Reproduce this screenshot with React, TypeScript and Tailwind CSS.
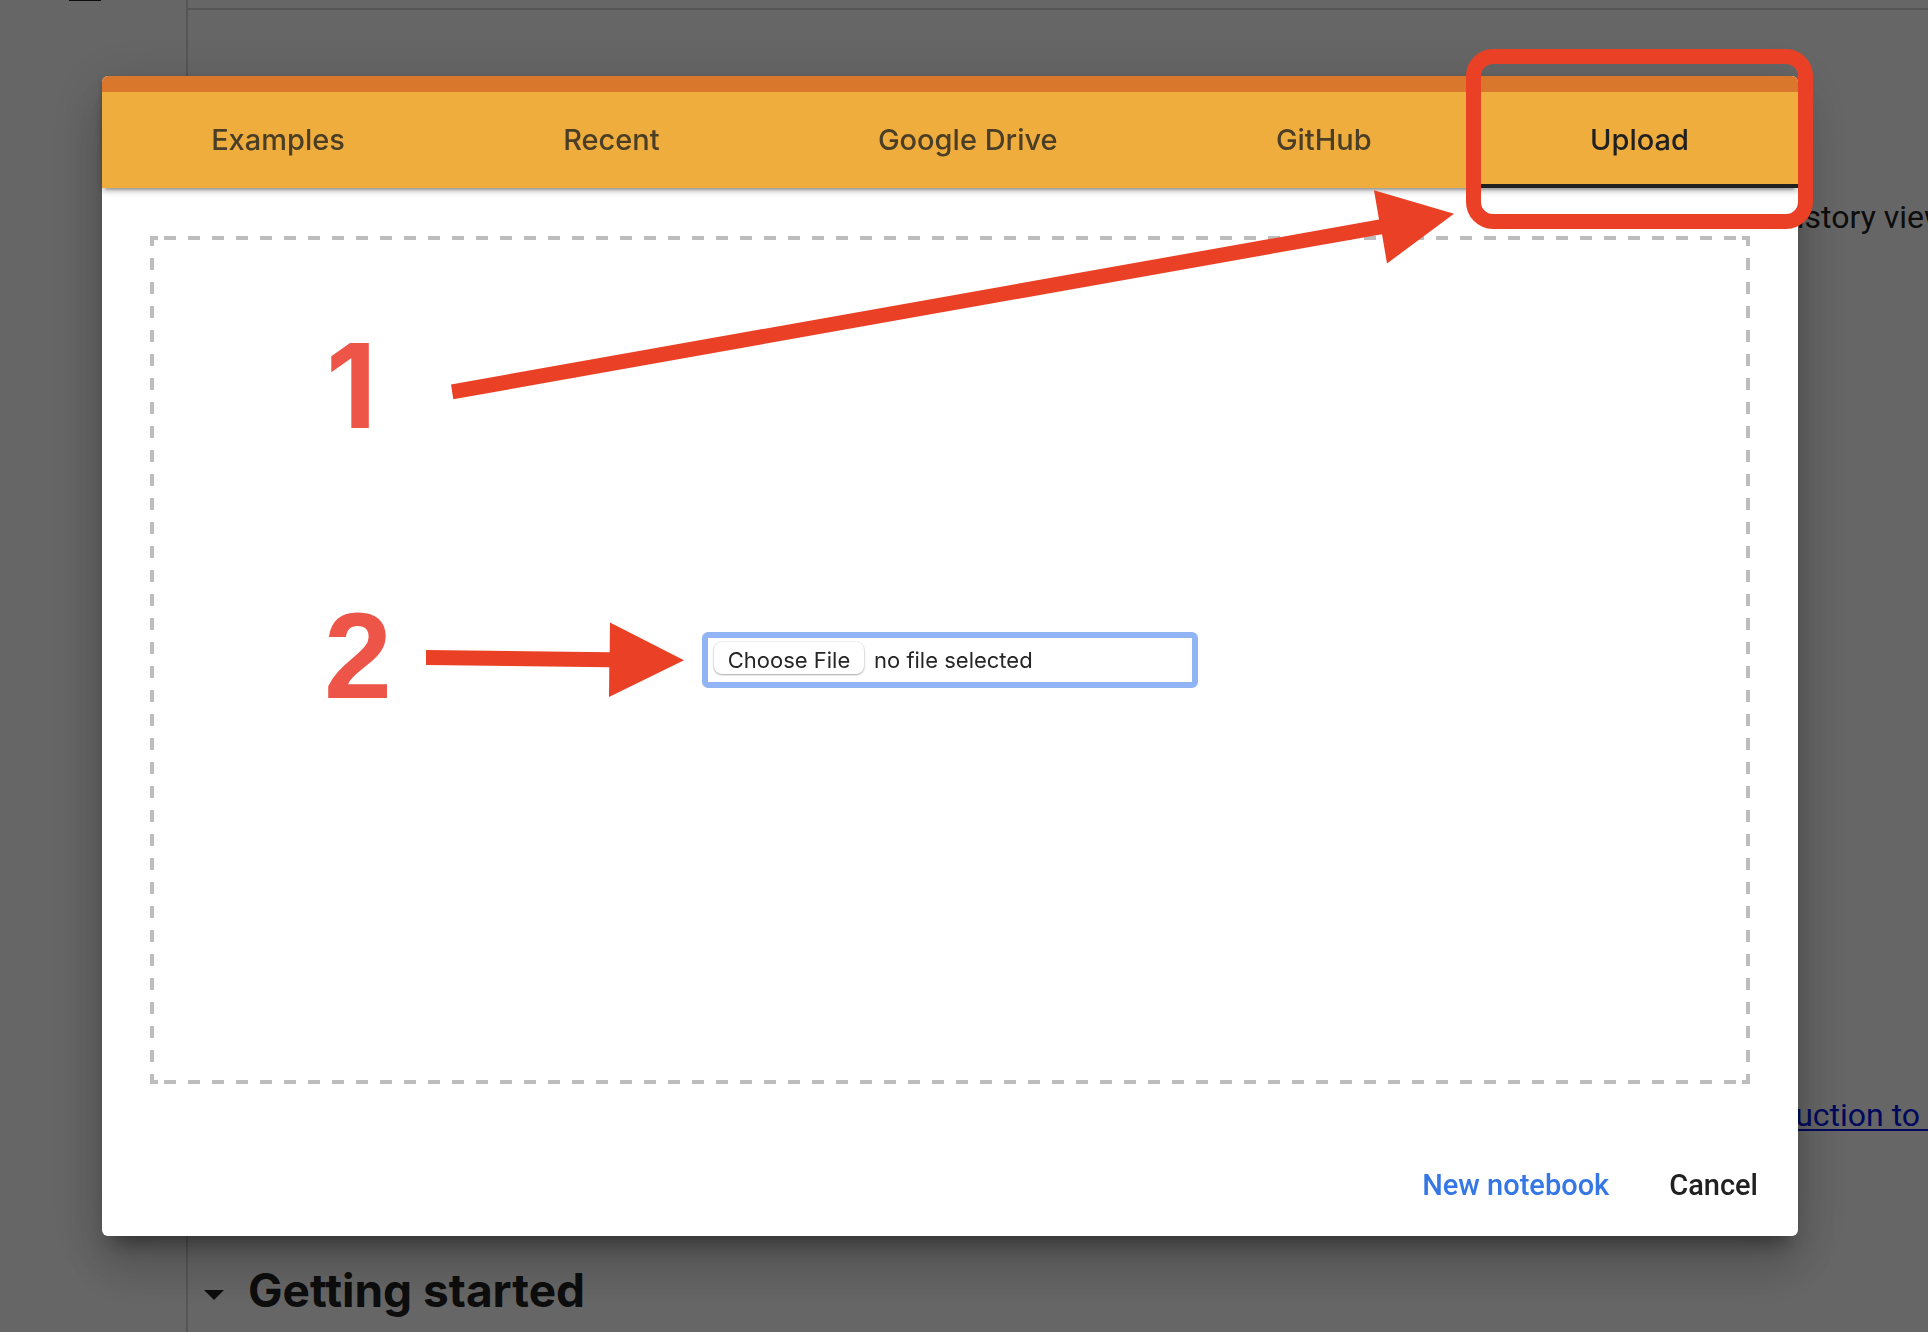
import React from "react";

const TABS = ["Examples", "Recent", "Google Drive", "GitHub", "Upload"];

function Page() {
  return (
    <div className="flex h-screen overflow-hidden bg-white text-[#212121]" aria-hidden="true">
      <aside className="flex w-[188px] shrink-0 flex-col border-r-2 border-[#d5d5d5]">
        <span className="ml-[69px] h-px w-8 bg-[#212121]" />
      </aside>
      <main className="flex min-w-0 flex-1 flex-col">
        <div className="h-[10px] shrink-0 border-b-2 border-[#d5d5d5]" />
        <div className="flex flex-1 flex-col justify-between overflow-hidden whitespace-nowrap pt-[187px] pb-[117px] text-right text-[32px] leading-[40px]">
          <p className="-mr-5">history view</p>
          <p>
            <a href="#intro" className="text-[#0016ea] underline decoration-2 underline-offset-[3px]">
              Introduction to&nbsp;
            </a>
          </p>
        </div>
        <h2 className="flex h-20 shrink-0 items-start gap-6 pl-4 font-['Inter'] text-[46px] leading-[76px] font-bold">
          <svg width="20" height="10" viewBox="0 0 20 10" className="mt-[38px]">
            <path d="M0 0h20L10 10z" fill="currentColor" />
          </svg>
          Getting started
        </h2>
      </main>
    </div>
  );
}

function Tabs() {
  return (
    <div
      role="tablist"
      className="flex h-28 shrink-0 rounded-t-md border-t-[16px] border-[#d9772d] bg-[#efad3d] shadow-[0_4px_4px_rgba(0,0,0,0.14),0_2px_10px_rgba(0,0,0,0.12),0_6px_2px_-4px_rgba(0,0,0,0.2)]"
    >
      {TABS.map((tab) => {
        const selected = tab === "Upload";
        return (
          <button
            key={tab}
            role="tab"
            aria-selected={selected}
            className={
              "relative flex-auto whitespace-nowrap font-['Inter'] text-[29px] leading-9 font-medium " +
              (selected ? "text-[#212121] shadow-[inset_0_-4px_0_#212121]" : "text-[#4a3e26]")
            }
          >
            {tab}
            {selected && (
              <span className="pointer-events-none absolute -top-[43px] -right-[15px] -bottom-[41px] -left-[15px] z-10 rounded-[27px] border-[15px] border-[#ea4025]" />
            )}
          </button>
        );
      })}
    </div>
  );
}

function DropZone() {
  return (
    <div className="mx-12 mt-12 flex min-h-0 flex-1 items-center justify-center [background:linear-gradient(#bdbdbd,#bdbdbd)_0_0/8px_4px_no-repeat,linear-gradient(#bdbdbd,#bdbdbd)_100%_0/8px_4px_no-repeat,linear-gradient(#bdbdbd,#bdbdbd)_0_100%/8px_4px_no-repeat,linear-gradient(#bdbdbd,#bdbdbd)_100%_100%/8px_4px_no-repeat,linear-gradient(90deg,#bdbdbd_50%,transparent_50%)_14px_0/24px_4px_repeat-x,linear-gradient(90deg,#bdbdbd_50%,transparent_50%)_14px_100%/24px_4px_repeat-x,linear-gradient(#bdbdbd_50%,transparent_50%)_0_22px/4px_24px_repeat-y,linear-gradient(#bdbdbd_50%,transparent_50%)_100%_22px/4px_24px_repeat-y]">
      <label className="flex h-14 w-[496px] cursor-pointer items-center gap-[10px] rounded-md border-[6px] border-[#91b4f5] bg-white pl-[6px] font-['Inter'] text-[22px] leading-7 text-[#262626]">
        <input type="file" className="sr-only" />
        <span className="mb-1 flex h-8 w-[150px] items-center justify-center rounded-lg bg-white pt-1 shadow-[0_0_1px_1px_rgba(0,0,0,0.06),0_1px_2px_rgba(0,0,0,0.3)]">
          Choose File
        </span>
        <span>no file selected</span>
      </label>
    </div>
  );
}

function Annotations() {
  return (
    <div className="pointer-events-none absolute inset-0 leading-[120px] font-bold text-[#ec5547]">
      <span className="absolute top-[250px] left-[224px] font-['Inter'] text-[117px]">1</span>
      <span className="absolute top-[520px] left-[222px] font-['Liberation_Sans'] text-[122px]">2</span>
      <svg className="absolute top-0 left-0" width="1400" height="700" viewBox="102 76 1400 700" fill="#ea4025">
        <path d="M451 384.5L1379 219.5L1374 190.3L1454 213.7L1387 263.5L1382 234.2L453.3 399.2Z" />
        <path d="M426 650L609.7 652.2L610 622.5L684 660.3L609 697L609.3 667.2L426 665Z" />
      </svg>
    </div>
  );
}

function UploadDialog() {
  return (
    <div className="fixed inset-0 flex bg-black/60 pt-[76px] pr-[130px] pb-24 pl-[102px]">
      <div
        role="dialog"
        aria-label="Open notebook"
        className="relative flex min-w-0 flex-1 flex-col rounded-md bg-white shadow-[0_32px_48px_4px_rgba(0,0,0,0.14),0_12px_60px_10px_rgba(0,0,0,0.12),0_16px_20px_-10px_rgba(0,0,0,0.4)]"
      >
        <Tabs />
        <DropZone />
        <div className="flex h-[152px] shrink-0 items-end justify-end gap-7 pr-6 pb-6 text-[29px] leading-[38px] font-medium">
          <button className="px-4 py-2 text-[#3578e5]">New notebook</button>
          <button className="px-4 py-2 text-[#212121]">Cancel</button>
        </div>
        <Annotations />
      </div>
    </div>
  );
}

export default function App() {
  return (
    <div className="font-['Roboto',sans-serif]">
      <Page />
      <UploadDialog />
    </div>
  );
}
